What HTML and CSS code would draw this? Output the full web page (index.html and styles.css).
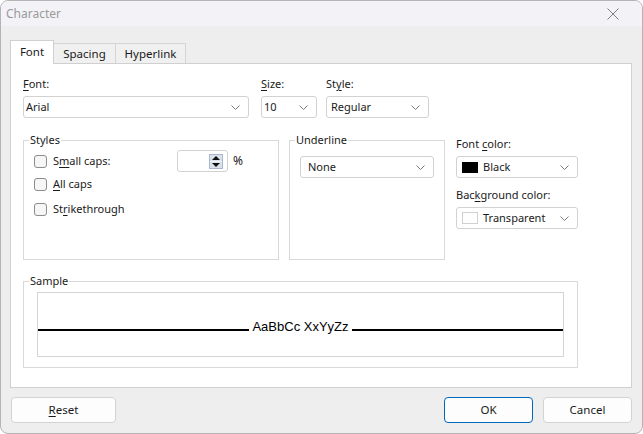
FILE: index.html
```html
<!DOCTYPE html>
<html>
<head>
<meta charset="utf-8">
<link rel="stylesheet" href="styles.css">
</head>
<body>
<div class="window">
  <div class="titlebar">
    <span class="title">Character</span>
    <svg class="close" width="12" height="12" viewBox="0 0 12 12"><path d="M0.5 0.5 L11.5 11.5 M11.5 0.5 L0.5 11.5" stroke="#808080" stroke-width="1" fill="none"/></svg>
  </div>
  <div class="body">
    <div class="tabs">
      <div class="tab active">Font</div>
      <div class="tab t-spacing">Spacing</div>
      <div class="tab t-hyper">Hyperlink</div>
    </div>
    <div class="page">
      <div class="row1">
        <div class="field f-font">
          <div class="label"><u>F</u>ont:</div>
          <div class="combo edit"><span>Arial</span><svg class="chev" width="9" height="5" viewBox="0 0 9 5"><path d="M0.5 0.5 L4.5 4.5 L8.5 0.5" stroke="#7a7a7a" fill="none"/></svg></div>
        </div>
        <div class="field f-size">
          <div class="label"><u>S</u>ize:</div>
          <div class="combo edit"><span>10</span><svg class="chev" width="9" height="5" viewBox="0 0 9 5"><path d="M0.5 0.5 L4.5 4.5 L8.5 0.5" stroke="#7a7a7a" fill="none"/></svg></div>
        </div>
        <div class="field f-style">
          <div class="label">St<u>y</u>le:</div>
          <div class="combo list"><span>Regular</span><svg class="chev" width="9" height="5" viewBox="0 0 9 5"><path d="M0.5 0.5 L4.5 4.5 L8.5 0.5" stroke="#7a7a7a" fill="none"/></svg></div>
        </div>
      </div>
      <div class="row2">
        <fieldset class="group g-styles">
          <legend>Styles</legend>
          <div class="checks">
            <div class="check first">
              <span class="cb"></span><span class="cl">S<u>m</u>all caps:</span>
              <div class="spin">
                <svg width="14" height="15" viewBox="0 0 14 15">
                  <rect x="0.5" y="0.5" width="13" height="14" fill="#d9e1ec" stroke="#aab7cb"/>
                  <line x1="1" y1="7.5" x2="13" y2="7.5" stroke="#f4f6fa"/>
                  <path d="M3 6 L7 2 L11 6 Z" fill="#111"/>
                  <path d="M3 9 L11 9 L7 13 Z" fill="#111"/>
                </svg>
              </div>
              <span class="pct">%</span>
            </div>
            <div class="check second"><span class="cb"></span><span class="cl"><u>A</u>ll caps</span></div>
            <div class="check third"><span class="cb"></span><span class="cl">St<u>r</u>ikethrough</span></div>
          </div>
        </fieldset>
        <fieldset class="group g-under">
          <legend>Underline</legend>
          <div class="under-inner">
            <div class="combo list wide"><span>None</span><svg class="chev" width="9" height="5" viewBox="0 0 9 5"><path d="M0.5 0.5 L4.5 4.5 L8.5 0.5" stroke="#7a7a7a" fill="none"/></svg></div>
          </div>
        </fieldset>
        <div class="colors">
          <div class="label">Font <u>c</u>olor:</div>
          <div class="combo color"><span class="sw black"></span><span>Black</span><svg class="chev" width="9" height="5" viewBox="0 0 9 5"><path d="M0.5 0.5 L4.5 4.5 L8.5 0.5" stroke="#7a7a7a" fill="none"/></svg></div>
          <div class="label l-bg">Bac<u>k</u>ground color:</div>
          <div class="combo color"><span class="sw trans"></span><span>Transparent</span><svg class="chev" width="9" height="5" viewBox="0 0 9 5"><path d="M0.5 0.5 L4.5 4.5 L8.5 0.5" stroke="#7a7a7a" fill="none"/></svg></div>
        </div>
      </div>
      <fieldset class="group g-sample">
        <legend>Sample</legend>
        <div class="sample-box">
          <div class="sample-row">
            <div class="rule"></div>
            <span class="sample-text">AaBbCc XxYyZz</span>
            <div class="rule"></div>
          </div>
        </div>
      </fieldset>
    </div>
    <div class="buttons">
      <button class="btn reset"><u>R</u>eset</button>
      <div class="spacer"></div>
      <button class="btn ok">OK</button>
      <button class="btn cancel">Cancel</button>
    </div>
  </div>
</div>
</body>
</html>
```
FILE: styles.css
```css
* { box-sizing: border-box; }
html, body { margin: 0; padding: 0; background: #ffffff; }
body {
  font-family: "Noto Sans", "Open Sans", sans-serif;
  font-size: 11px;
  line-height: 16px;
  color: #1a1a1a;
}
u { text-decoration: underline; text-underline-offset: 2px; text-decoration-thickness: 1px; }

.window {
  width: 643px;
  height: 434px;
  border: 1px solid #b4b4b4;
  border-radius: 8px;
  overflow: hidden;
  background: #eeeeee;
  display: flex;
  flex-direction: column;
}

.titlebar {
  height: 25px;
  background: #f3f3f7;
  display: flex;
  align-items: center;
  padding: 0 23px 0 5px;
  font-size: 12px;
}
.title { color: #9a9a9a; flex: 1; }
.close { display: block; }

.body {
  flex: 1;
  padding: 14px 10px 0 9px;
  display: flex;
  flex-direction: column;
}

.tabs {
  display: flex;
  align-items: flex-end;
  height: 23px;
  position: relative;
  z-index: 1;
  font-size: 11.5px;
}
.tab {
  height: 20px;
  background: #f0f0f0;
  border: 1px solid #d5d5d5;
  border-bottom: none;
  border-left: none;
  text-align: center;
  line-height: 19px;
}
.tab.active {
  width: 44px;
  height: 24px;
  margin-bottom: -1px;
  background: #ffffff;
  border-left: 1px solid #d0d0d0;
  border-color: #d0d0d0;
  line-height: 22px;
}
.t-spacing { width: 62px; }
.t-hyper { width: 70px; }

.page {
  height: 325px;
  background: #ffffff;
  border: 1px solid #d0d0d0;
  padding: 12px 12px 0 12px;
}

.row1 { display: flex; }
.field { display: flex; flex-direction: column; gap: 4px; }
.f-font { width: 226px; }
.f-size { width: 56px; margin-left: 12px; }
.f-style { width: 103px; margin-left: 9px; }

.combo {
  height: 22px;
  background: #ffffff;
  border: 1px solid #d2d2d2;
  border-radius: 3px;
  display: flex;
  align-items: center;
  padding-right: 8px;
}
.combo span { flex: 1; }
.combo.edit { padding-left: 2px; }
.combo.list { padding-left: 4px; }
.combo.wide { padding-left: 7px; }
.chev { display: block; flex: none; }

.row2 { display: flex; margin-top: 14px; }

.group {
  margin: 0;
  padding: 0;
  border: 1px solid #d9d9d9;
  min-width: 0;
}
.group legend {
  margin-left: 5px;
  padding: 0 1px;
  line-height: 16px;
}
.g-styles { width: 256px; height: 128px; }
.g-under { width: 156px; height: 128px; margin-left: 10px; }

.checks { padding: 2px 0 0 10px; }
.check { display: flex; align-items: center; height: 24px; }
.check.first { height: 22px; }
.check.second { height: 24px; }
.check.third { height: 26px; }
.cb {
  width: 13px;
  height: 13px;
  border: 1px solid #8c8c8c;
  border-radius: 3px;
  background: #f6f6f6;
  flex: none;
}
.cl { margin-left: 6px; width: 124px; }
.spin {
  width: 51px;
  height: 22px;
  border: 1px solid #d2d2d2;
  border-radius: 3px;
  background: #fff;
  display: flex;
  align-items: center;
  justify-content: flex-end;
  padding-right: 4px;
}
.spin svg { display: block; }
.pct { margin-left: 5px; font-size: 12px; }

.under-inner { padding: 8px 10px 0 10px; }

.colors {
  margin-left: 11px;
  width: 122px;
  padding-top: 4px;
  display: flex;
  flex-direction: column;
}
.colors .combo { margin-top: 4px; padding-left: 5px; }
.l-bg { margin-top: 9px; }
.sw { width: 16px; height: 11px; flex: none !important; margin-right: 5px; }
.sw.black { background: #000; }
.sw.trans { background: #fff; border: 1px solid #d0d0d0; height: 12px; }

.g-sample { width: 555px; height: 95px; margin-top: 13px; }
.sample-box {
  margin: 3px 13px 0 13px;
  height: 65px;
  border: 1px solid #d5d5d5;
  background: #fff;
  padding-top: 26px;
}
.sample-row { display: flex; align-items: baseline; }
.rule { flex: 1; height: 2px; background: #000; }
.sample-text {
  font-family: "Liberation Sans", Arial, sans-serif;
  font-size: 13px;
  line-height: 16px;
  color: #000;
  margin: 0 3px;
}

.buttons {
  display: flex;
  margin-top: 9px;
}
.spacer { flex: 1; }
.btn {
  height: 26px;
  font: inherit;
  font-size: 11.5px;
  color: #1a1a1a;
  background: #fdfdfd;
  border: 1px solid #d3d3d3;
  border-radius: 4px;
  padding: 0;
}
.reset { width: 105px; margin-left: 1px; }
.ok { width: 89px; margin-right: 0; border-color: #0067c0; }
.cancel { width: 89px; margin-left: 10px; }
```
